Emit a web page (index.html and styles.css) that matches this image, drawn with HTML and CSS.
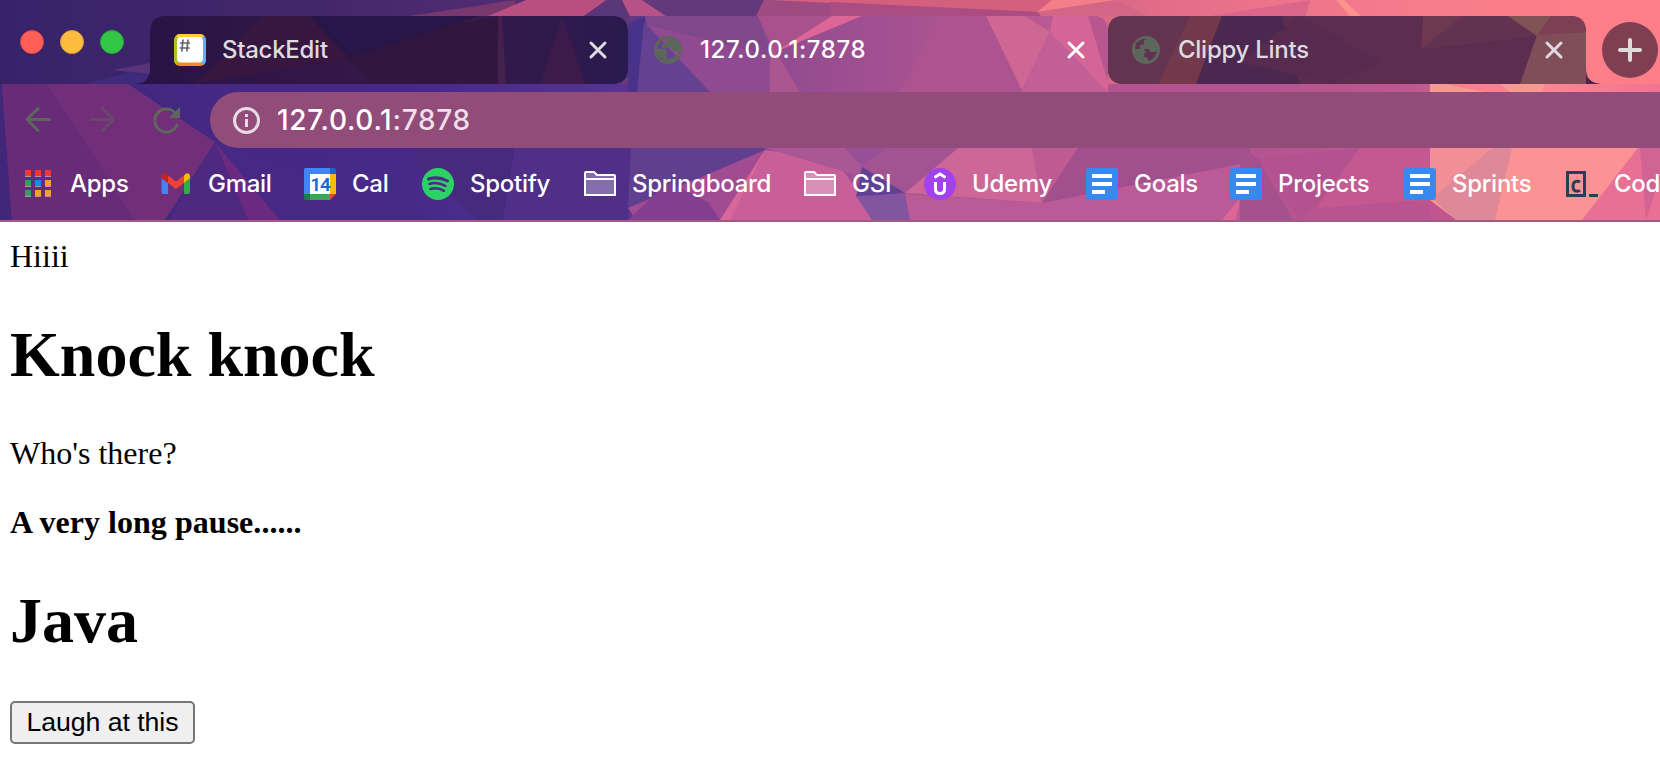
FILE: index.html
```html
<!DOCTYPE html>
<html lang="en">
<head>
<meta charset="utf-8">
<title>127.0.0.1:7878</title>
<link rel="stylesheet" href="styles.css">
</head>
<body>
<header class="browser">
  <svg class="theme" viewBox="0 0 1660 220" width="1660" height="220" aria-hidden="true">
    <defs>
      <linearGradient id="frame"><stop offset="0" stop-color="#37236a"/><stop offset=".2" stop-color="#44276b"/><stop offset=".3" stop-color="#522c73"/><stop offset=".43" stop-color="#75407f"/><stop offset=".55" stop-color="#b9547f"/><stop offset=".7" stop-color="#e36d89"/><stop offset=".85" stop-color="#f67c8c"/><stop offset="1" stop-color="#ff7f88"/></linearGradient>
      <linearGradient id="bar"><stop offset="0" stop-color="#41277a"/><stop offset=".25" stop-color="#47298a"/><stop offset=".37" stop-color="#563390"/><stop offset=".5" stop-color="#9c4f92"/><stop offset=".85" stop-color="#bd5790"/><stop offset=".93" stop-color="#fb8691"/><stop offset="1" stop-color="#f27392"/></linearGradient>
      <linearGradient id="tabA"><stop offset="0" stop-color="#261445"/><stop offset=".4" stop-color="#341746"/><stop offset=".7" stop-color="#34194a"/><stop offset="1" stop-color="#2a1a4e"/></linearGradient>
      <linearGradient id="active"><stop offset="0" stop-color="#523589"/><stop offset=".15" stop-color="#85488f"/><stop offset=".5" stop-color="#a04f91"/><stop offset="1" stop-color="#c25d93"/></linearGradient>
      <clipPath id="clipA"><path d="M134 84q16 0 16-16V32q0-16 16-16h446q16 0 16 16v36q0 16-16 16z"/></clipPath>
      <clipPath id="clipB"><path d="M628 92V32q0-16 16-16h448q16 0 16 16v60z"/></clipPath>
      <clipPath id="clipC"><path d="M1108 32q0-16 16-16h446q16 0 16 16v36q0 16 16 16h-478q-16 0-16-16z"/></clipPath>
    </defs>
    <path fill="url(#frame)" d="M0 0h1660v84H0z"/>
    <path fill="#5b3379" d="M112 70l38-7v11z"/>
    <path fill="#3e2b7b" d="M85 84l45-12 20 2v10z"/>
    <path fill="#79376f" d="M410 16L515 0v16z"/>
    <path fill="#b94f80" d="M488 16l38-16h80l-22 16z"/>
    <path fill="#593677" d="M584 16l26-16h12l10 28z"/>
    <path fill="#b65285" d="M622 0h20l24 16h-36z"/>
    <path fill="#64397c" d="M642 0h122l-8 16h-90z"/>
    <path fill="#9d4b80" d="M764 0h66v16h-74z"/>
    <path fill="#d4607e" d="M770 0h290l-20 12-210-9z"/>
    <path fill="#ab4c82" d="M830 2l210 10v4H830z"/>
    <path fill="#f27e88" d="M1052 0h65l-80 12z"/>
    <path fill="#d36687" d="M1037 12l80-12 30 16h-105z"/>
    <path fill="#ff928e" d="M1336 0h8l17 16h-11z"/>
    <path fill="#dc668b" d="M1210 16l100-16-4 16z"/>
    <path fill="url(#bar)" d="M0 84h1660v136H0z"/>
    <path fill="#722f79" d="M2 84h126l87 58-50 78H12z"/>
    <path fill="#682b77" d="M2 84h45l88 136H12z"/>
    <path fill="#6b2a80" d="M215 142l65 78h-32z"/>
    <path fill="#4f2981" d="M215 142l33 78h-78z"/>
    <path fill="#472985" d="M215 142l220 78H280z"/>
    <path fill="#472a7d" d="M415 148h100l-12 72h-25l-63-56z"/>
    <path fill="#502f88" d="M515 148h116l-3 72H503z"/>
    <path fill="#603f8e" d="M631 148h134v2l-137 58z"/>
    <path fill="#a04b92" d="M765 150l-137 58 8 12h84z"/>
    <path fill="#823e90" d="M628 220l40-38 40 20 12 18z"/>
    <path fill="#c95f98" d="M765 150l-45 70h160l-45-60z"/>
    <path fill="#da679a" d="M765 150l-45 70h10z"/>
    <path fill="#a95795" d="M765 148h80l17 17 0 12z"/>
    <path fill="#975098" d="M845 148h60l-43 18z"/>
    <path fill="#a25392" d="M862 165l25-17h71l-53 45z"/>
    <path fill="#604195" d="M862 167l43 26-49 4z"/>
    <path fill="#8354a0" d="M856 196l49-2 22 26h-55z"/>
    <path fill="#ba5b97" d="M905 194l137 9 208-41v58H910z"/>
    <path fill="#cc6798" d="M958 148h74l10 55-137-10z"/>
    <path fill="#bd5b92" d="M1032 148h46l-36 55z"/>
    <path fill="#a24f8e" d="M1078 148h172v14l-208 41z"/>
    <path fill="#a5508f" d="M1240 148l18 10 35 62h-53z"/>
    <path fill="#b3528f" d="M1258 158l102-10-44 60-16 12z"/>
    <path fill="#c45890" d="M1360 148h70v52l-114 8z"/>
    <path fill="#b95490" d="M1316 208l114-8v20h-130z"/>
    <path fill="#dd6696" d="M1222 220l18-22-4 22z"/>
    <path fill="#fb9294" d="M1430 148h208l-56 72h-152z"/>
    <path fill="#df8998" d="M1432 198l60-50h20l-17 72h-40z"/>
    <path fill="#f18e96" d="M1430 148h62l-60 50z"/>
    <path fill="#c05590" d="M1430 200l26 20h-26z"/>
    <path fill="#e87095" d="M1582 220l56-72h22v72z"/>
    <path fill="#d16492" d="M1640 148h20v30l-14 42z"/>
    <path fill="#f59991" d="M1430 84h115l-3 8h-112z"/>
    <path fill="#fb7f91" d="M1445 84h55l10 8h-25z"/>
    <path fill="#b35390" d="M1108 84h130v8h-130z"/>
    <g clip-path="url(#clipB)">
      <path fill="url(#active)" d="M628 16h480v76H628z"/>
      <path fill="#49328a" d="M628 24l18-8-2 76h-16z"/>
      <path fill="#644191" d="M644 22l66 70h-73z"/>
      <path fill="#80478c" d="M645 16h113l14 40-126-32z"/>
      <path fill="#8f4a91" d="M646 24l124 32v36h-60z"/>
      <path fill="#ab568f" d="M770 42l30 50h-30z"/>
      <path fill="#a8518a" d="M758 16h77l-60 36z"/>
      <path fill="#de6598" d="M832 16h30l-87 36z"/>
      <path fill="#ad5490" d="M940 16h46l36 76H900z"/>
      <path fill="#cf6795" d="M986 16h39l25 16-28 58z"/>
      <path fill="#c15f96" d="M1050 32l68 60h-96z"/>
      <path fill="#d66597" d="M1053 16h55v76L1050 32z"/>
      <path fill="#b85690" d="M1088 16h20v66z"/>
    </g>
    <g clip-path="url(#clipA)">
      <path fill="url(#tabA)" d="M130 16h498v68H130z"/>
      <path fill="#371740" d="M264 16h45l41 42-155 26 50-50z"/>
      <path fill="#31163f" d="M345 58l90-30 65-12-2 68H375z"/>
      <path fill="#271647" d="M309 16h170l-129 42z"/>
      <path fill="#45204d" d="M498 16h4l4 68h-8z"/>
      <path fill="#3c1b4a" d="M562 16l23 68h-45z"/>
    </g>
    <g clip-path="url(#clipC)">
      <path fill="#5d2d4f" d="M1108 16h494v68h-494z"/>
      <path fill="#63344f" d="M1108 16h85l-35 68h-50z"/>
      <path fill="#72394d" d="M1190 16h32l-26 68h-38z"/>
      <path fill="#4b2850" d="M1222 16h60l18 68h-104z"/>
      <path fill="#562b4f" d="M1240 62l60-46 80 46-50 22z"/>
      <path fill="#6d3850" d="M1423 16h90l24 20-116 13z"/>
      <path fill="#623350" d="M1421 49l42-33h48l26 20z"/>
      <path fill="#805253" d="M1508 16h44l-15 20z"/>
      <path fill="#7e3e53" d="M1552 16h34v16l-49 4z"/>
      <path fill="#804e58" d="M1537 35l49-3v52h-66z"/>
      <path fill="#4a2348" d="M1586 78l16 6h-16z"/>
    </g>
  </svg>

  <div class="tabstrip">
    <div class="lights"><i class="light red"></i><i class="light amber"></i><i class="light green"></i></div>
    <div class="tab">
      <svg class="favicon" viewBox="0 0 32 32"><rect width="32" height="32" rx="6" fill="#f68a1e"/><path fill="#5caeff" d="M27 1q5 1 5 6v18q0 4-3 6l-3-5z"/><path fill="#b0bf24" d="M5 1Q0 2 0 7v18q0 4 3 6l3-5z"/><path fill="#ffd02e" d="M6 0h20q3 0 4 2l-5 4H6L2 2q1-2 4-2z"/><rect x="3" y="3" width="26" height="25.500" rx="4" fill="#fff"/><path d="M9 5.500L7.800 17.500M14 5.500l-1.200 12M6 9h10M5.700 14h10" stroke="#666" stroke-width="1.700"/></svg>
      <span class="tab-title">StackEdit</span>
      <svg class="close" viewBox="0 0 20 20"><path d="M3 3l14 14M17 3L3 17"/></svg>
    </div>
    <div class="tab active">
      <svg class="favicon" viewBox="0 0 32 32"><path class="globe" fill-rule="evenodd" d="M16 2a14 14 0 100 28 14 14 0 000-28zM18 5l-5 1q-7 2-8 9h8l3 3-2 3 2 6q-8-1-11-9 2 9 11 9v-2q9-1 11-9l-2 1h-5q0-3-2-3h-8v-4h2q2 0 2-2V7l4-1z"/></svg>
      <span class="tab-title ip">127.0.0.1:7878</span>
      <svg class="close" viewBox="0 0 20 20"><path d="M3 3l14 14M17 3L3 17"/></svg>
    </div>
    <div class="tab last">
      <svg class="favicon" viewBox="0 0 32 32"><circle class="globe" cx="16" cy="16" r="14"/><path fill="#603250" d="M18 5l-4 1v3q0 2-2 2h-2v4h8q2 0 2 3h5q1 0 2-2-1 9-9 11v-2l-2-2h-2v-3l2-2-2-3H5Q5 7 13 5z"/><path class="globe" d="M17 5v4l-3 2v2h5l2 4 5-1q1-6-4-9zM5 16h8l2 3-2 3 2 5q-9 0-10-11z"/></svg>
      <span class="tab-title">Clippy Lints</span>
      <svg class="close" viewBox="0 0 20 20"><path d="M3 3l14 14M17 3L3 17"/></svg>
    </div>
    <div class="new-tab"><svg viewBox="0 0 28 28" width="28" height="28"><path d="M14 4v20M4 14h20" stroke="#dedbdc" stroke-width="4" stroke-linecap="round"/></svg></div>
  </div>

  <div class="toolbar">
    <svg class="nav" viewBox="0 0 32 32"><path d="M27.500 15.500H5M16 4.500L5 15.500l11 11"/></svg>
    <svg class="nav dim" viewBox="0 0 32 32"><path d="M5 15.500h22.500M16.500 4.500l11 11-11 11"/></svg>
    <svg class="nav" viewBox="0 0 32 32"><path d="M25 9A11.500 11.500 0 1 0 27 21"/><path class="solid" d="M30 3v11H19z"/></svg>
    <div class="omnibox">
      <svg viewBox="0 0 28 28" width="28" height="28"><circle cx="14.500" cy="14.500" r="12" fill="none" stroke="#e7dce4" stroke-width="3"/><path d="M14.500 13v8M14.500 8v3" stroke="#e7dce4" stroke-width="3"/></svg>
      <span class="url"><b>127.0.0.1</b>:7878</span>
    </div>
  </div>

  <nav class="bookmarks">
    <a class="bookmark"><svg viewBox="0 0 32 32"><path stroke="#ad93b0" stroke-width="1" stroke-dasharray="6 4" d="M3 8.500h26M3 18.500h26M3 28.500h26"/><path fill="#f9352f" d="M3 2h6v6H3zM13 2h6v6h-6zM23 2h6v6h-6z"/><path fill="#34a05b" d="M3 12h6v6H3zM3 22h6v6H3z"/><path fill="#0a8cf5" d="M13 12h6v6h-6z"/><path fill="#f6a21c" d="M23 12h6v6h-6zM13 22h6v6h-6zM23 22h6v6h-6z"/></svg><span>Apps</span></a>
    <a class="bookmark"><svg viewBox="0 0 32 32"><path fill="#4285f4" d="M1.500 10l6.500 5v11H3.500a2 2 0 01-2-2z"/><path fill="#34a853" d="M24 15l6-5v14a2 2 0 01-2 2h-4z"/><path fill="#ea4335" d="M8 7.500l8 6 8-6V15l-8 6-8-6z"/><path fill="#c5221f" d="M1.500 8.500C1.500 5 5 3.800 8 7.500V15l-6.500-5z"/><path fill="#fbbc04" d="M24 7.500c3-3.700 6-2.500 6 1V10l-6 5z"/></svg><span>Gmail</span></a>
    <a class="bookmark"><svg viewBox="0 0 32 32"><path fill="#fff" d="M6 6h20v20H6z"/><path fill="#4285f4" d="M2 0h24v6H6v20H0V2q0-2 2-2z"/><path fill="#1967d2" d="M26 0h4q2 0 2 2v4h-6z"/><path fill="#fbbc04" d="M26 6h6v20h-6z"/><path fill="#34a853" d="M6 26h20v6H6z"/><path fill="#188038" d="M0 26h6v6H2q-2 0-2-2z"/><path fill="#ea4335" d="M26 26h6l-6 6z"/><text x="16" y="22.500" class="day">14</text></svg><span>Cal</span></a>
    <a class="bookmark"><svg viewBox="0 0 32 32"><circle cx="16" cy="16" r="16" fill="#2bd365"/><path fill="none" stroke="#4b2d82" stroke-linecap="round" stroke-width="3" d="M6.500 11q10-3 19 2"/><path fill="none" stroke="#4b2d82" stroke-linecap="round" stroke-width="2.500" d="M7.500 16q8-2.500 16 2M8.500 21q7-2 13.500 1.800"/></svg><span>Spotify</span></a>
    <a class="bookmark"><svg viewBox="0 0 32 32"><path class="folder" d="M1 27V5q0-1 1-1h8l3 3h17q1 0 1 1v19zM1 11h30"/></svg><span>Springboard</span></a>
    <a class="bookmark"><svg viewBox="0 0 32 32"><path class="folder" d="M1 27V5q0-1 1-1h8l3 3h17q1 0 1 1v19zM1 11h30"/></svg><span>GSI</span></a>
    <a class="bookmark"><svg viewBox="0 0 32 32"><circle cx="16" cy="16" r="16" fill="#a142ec"/><path fill="none" stroke="#fff" stroke-width="3" d="M11.500 14v7q0 4.500 4.500 4.500t4.500-4.500v-7M10.500 9.500L16 6l5.500 3.500"/></svg><span>Udemy</span></a>
    <a class="bookmark"><svg viewBox="0 0 32 32"><rect width="32" height="32" rx="3" fill="#3788ef"/><path fill="#fff" d="M6 6h20v4H6zM6 14h20v4H6zM6 22h13v4H6z"/></svg><span>Goals</span></a>
    <a class="bookmark"><svg viewBox="0 0 32 32"><rect width="32" height="32" rx="3" fill="#3788ef"/><path fill="#fff" d="M6 6h20v4H6zM6 14h20v4H6zM6 22h13v4H6z"/></svg><span>Projects</span></a>
    <a class="bookmark"><svg viewBox="0 0 32 32"><rect width="32" height="32" rx="3" fill="#3788ef"/><path fill="#fff" d="M6 6h20v4H6zM6 14h20v4H6zM6 22h13v4H6z"/></svg><span>Sprints</span></a>
    <a class="bookmark"><svg viewBox="0 0 32 32"><path fill="none" stroke="#243f57" stroke-width="3" d="M1.500 4.500h17v23h-17z"/><path fill="none" stroke="#243f57" stroke-width="3" d="M14 14q-1-.8-3-.8-4 0-4 5t4 5q2 0 3-.8M23 27.500h9"/></svg><span>Cod</span></a>
  </nav>
</header>

<main class="page">
  <div class="intro">Hiiii</div>
  <h1>Knock knock</h1>
  <p>Who's there?</p>
  <p class="pause"><b>A very long pause......</b></p>
  <h1>Java</h1>
  <button class="laugh">Laugh at this</button>
</main>
</body>
</html>
```
FILE: styles.css
```css
* { box-sizing: border-box; }
body { margin: 0; background: #fff; overflow: hidden; }

.browser {
  position: relative;
  height: 222px;
  overflow: hidden;
  border-bottom: 2px solid #a15b83;
  font-family: Inter, "Liberation Sans", sans-serif;
  font-size: 24px;
  font-weight: 500;
  letter-spacing: -.27px;
  color: #fff;
}
.theme { position: absolute; top: 0; left: 0; z-index: -1; }

.tabstrip { display: flex; height: 84px; padding-top: 16px; }
.lights { display: flex; gap: 16px; width: 150px; padding: 14px 0 0 20px; }
.light { width: 24px; height: 24px; border-radius: 50%; }
.red { background: #ff5f57; border: 1px solid #df4744; }
.amber { background: #febc3f; border: 1px solid #de9f34; }
.green { background: #33c748; border: 1px solid #25ab35; }

.tab {
  display: flex;
  align-items: center;
  width: 478px;
  height: 68px;
  padding: 0 20px 0 24px;
  color: #dedbe0;
}
.tab.active { width: 480px; padding-right: 22px; color: #fff; }
.tab.last { padding-left: 22px; padding-right: 22px; }
.favicon { width: 32px; height: 32px; margin-right: 16px; }
.globe { fill: #5d665b; }
.tab-title { flex: 1; white-space: nowrap; line-height: 30px; }
.tab-title.ip { letter-spacing: .6px; }
.close { width: 20px; height: 20px; fill: none; stroke: currentColor; stroke-width: 3; stroke-linecap: round; }
.new-tab {
  display: flex;
  align-items: center;
  justify-content: center;
  width: 56px;
  height: 56px;
  margin: 6px 0 0 16px;
  border-radius: 50%;
  background: #803e52;
}

.toolbar { display: flex; height: 64px; padding: 8px 0 0 22px; align-items: center; }
.nav { width: 32px; height: 32px; margin-right: 32px; fill: none; stroke: #5f665e; stroke-width: 3; stroke-linecap: round; stroke-linejoin: round; flex: none; }
.nav.dim { opacity: .45; }
.nav .solid { fill: #5f665e; stroke: none; }
.nav:nth-of-type(3) { margin-right: 28px; }
.omnibox {
  flex: 1;
  display: flex;
  align-items: center;
  gap: 17px;
  height: 56px;
  padding-left: 22px;
  border-radius: 28px 0 0 28px;
  background: #924c79;
}
.url { font-size: 28px; letter-spacing: .7px; color: #eedfe8; }
.url b { font-weight: 500; color: #fff; }

.bookmarks {
  display: grid;
  grid-template-columns: 138px 144px 118px 162px 220px 120px 162px 144px 174px 162px 120px;
  height: 72px;
  padding-left: 22px;
}
.bookmark { display: flex; align-items: center; gap: 16px; white-space: nowrap; }
.bookmark svg { width: 32px; height: 32px; flex: none; }
.bookmark span { padding-bottom: 2px; }
.day { font: 600 19px Roboto, sans-serif; letter-spacing: -1px; fill: #1967d2; text-anchor: middle; }
.folder { fill: rgba(255, 255, 255, .3); stroke: #fff; stroke-width: 2; }

.page {
  padding: 16px 10px;
  font-family: "Liberation Serif", "Times New Roman", serif;
  font-size: 32px;
  color: #000;
}
.page h1 { margin: 43px 0; font-size: 64px; font-weight: 700; }
.page p { margin: 32px 0; }
.pause { letter-spacing: .04px; }
.laugh {
  display: block;
  width: 185px;
  height: 43px;
  padding: 0;
  border: 2px solid #767676;
  border-radius: 5px;
  background: #efefef;
  font: 26.67px "Liberation Sans", Arial, sans-serif;
  letter-spacing: -.05px;
  color: #000;
}
```
